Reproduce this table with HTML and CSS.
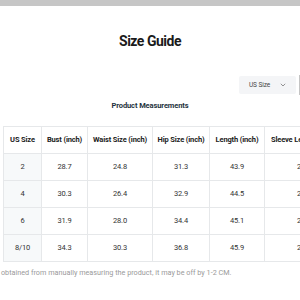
FILE: index.html
```html
<!DOCTYPE html>
<html lang="en">
<head>
  <meta charset="UTF-8" />
  <meta name="viewport" content="width=device-width, initial-scale=1.0" />
  <title>Size Guide</title>
  <link rel="stylesheet" href="styles.css">
</head>
<body>
  <div class="topbar"></div>

  <div class="guide">
    <h1 class="guide-title">Size Guide</h1>

    <div class="unit-row">
      <div class="unit-select">
        <span>US Size</span>
        <svg class="chevron" width="6" height="4" viewBox="0 0 6 4"><path d="M0.8 0.8 L3 3 L5.2 0.8" fill="none" stroke="#777" stroke-width="0.8"/></svg>
      </div>
      <div class="unit-edge"></div>
    </div>

    <h2 class="section-title">Product Measurements</h2>

    <div class="table-wrap">
      <table class="size-table">
        <thead>
          <tr>
            <th class="c-size">US Size</th>
            <th class="c-bust">Bust (inch)</th>
            <th class="c-waist">Waist Size (inch)</th>
            <th class="c-hip">Hip Size (inch)</th>
            <th class="c-len">Length (inch)</th>
            <th class="c-sleeve">Sleeve Length (inch)</th>
          </tr>
        </thead>
        <tbody>
          <tr><td class="c-size">2</td><td>28.7</td><td>24.8</td><td>31.3</td><td>43.9</td><td>23.2</td></tr>
          <tr><td class="c-size">4</td><td>30.3</td><td>26.4</td><td>32.9</td><td>44.5</td><td>23.6</td></tr>
          <tr><td class="c-size">6</td><td>31.9</td><td>28.0</td><td>34.4</td><td>45.1</td><td>24.0</td></tr>
          <tr><td class="c-size">8/10</td><td>34.3</td><td>30.3</td><td>36.8</td><td>45.9</td><td>24.4</td></tr>
        </tbody>
      </table>
      <p class="note">*Data obtained from manually measuring the product, it may be off by 1-2 CM.</p>
    </div>
  </div>
</body>
</html>
```

FILE: styles.css
```css
body {
  margin: 0;
  padding: 0;
  background-color: #fff;
  color: #222;
  font-family: Roboto, 'Liberation Sans', sans-serif;
  overflow: hidden;
}

.topbar {
  height: 6px;
  background-color: #c6c6c6;
}

.guide {
  width: 300px;
}

.guide-title {
  margin: 0;
  padding-top: 28px;
  text-align: center;
  font-size: 14px;
  line-height: 15px;
  font-weight: 700;
  letter-spacing: -0.5px;
  color: #1a1a1a;
}

.unit-row {
  display: flex;
  justify-content: flex-end;
  align-items: center;
  gap: 3px;
  margin-top: 26px;
}

.unit-select {
  display: flex;
  align-items: center;
  justify-content: space-between;
  box-sizing: border-box;
  width: 57px;
  height: 18px;
  padding: 0 10px 0 10px;
  background-color: #f4f5f7;
  border-radius: 2px;
  font-size: 6.5px;
  letter-spacing: -0.1px;
  color: #444;
}

.unit-edge {
  width: 1px;
  height: 20px;
  background-color: #c4c4c4;
}

.section-title {
  margin: 6px 0 0;
  text-align: center;
  font-size: 7.5px;
  line-height: 10px;
  font-weight: 700;
  letter-spacing: -0.1px;
  color: #1e3340;
}

.table-wrap {
  margin-top: 15px;
  padding-left: 3px;
}

.size-table {
  border-collapse: collapse;
  table-layout: fixed;
  width: 340px;
  font-size: 7.5px;
  letter-spacing: -0.15px;
}

.size-table th,
.size-table td {
  box-sizing: border-box;
  height: 27px;
  padding: 0;
  line-height: 10px;
  border: 1px solid #e6e8ea;
  text-align: center;
  white-space: nowrap;
  overflow: hidden;
}

.size-table th {
  font-weight: 700;
  color: #222;
}

.size-table td {
  color: #333;
}

.size-table td.c-size {
  background-color: #f7f9fa;
}

.c-size { width: 38px; }
.c-bust { width: 46px; }
.c-waist { width: 65px; }
.c-hip { width: 57px; }
.c-len { width: 55px; }
.c-sleeve { width: 79px; }

.note {
  margin: 6px 0 0 -22px;
  font-size: 7.25px;
  line-height: 10px;
  color: #9a9a9a;
  white-space: nowrap;
}
```
